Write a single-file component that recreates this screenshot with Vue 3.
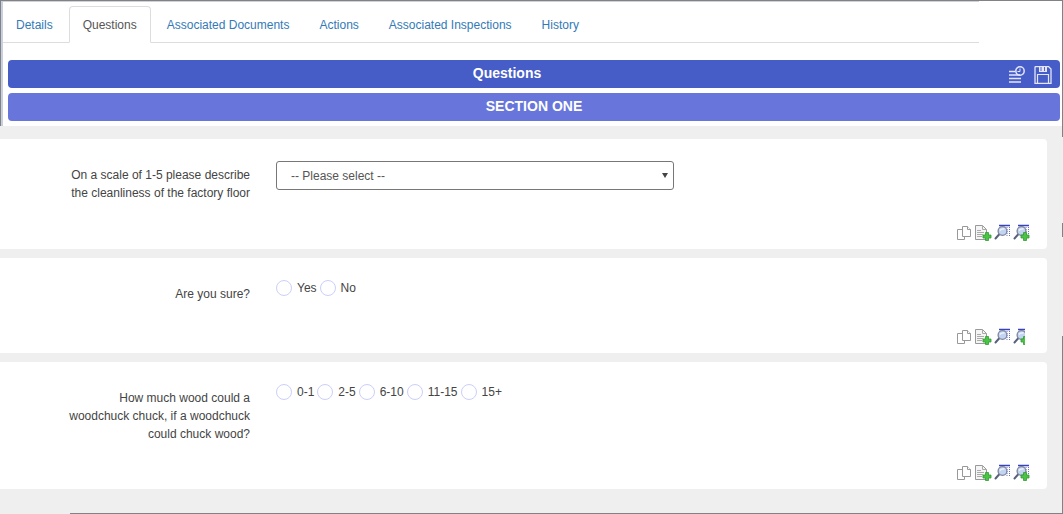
<script setup>
import { ref } from 'vue'

const tabs = ['Details', 'Questions', 'Associated Documents', 'Actions', 'Associated Inspections', 'History']
const active = ref('Questions')

const questions = [
  {
    id: 'clean',
    text: 'On a scale of 1-5 please describe the cleanliness of the factory floor',
    type: 'select',
    size: 'medium',
  },
  { id: 'sure', text: 'Are you sure?', type: 'radio', options: ['Yes', 'No'], size: 'small' },
  {
    id: 'wood',
    text: 'How much wood could a woodchuck chuck, if a woodchuck could chuck wood?',
    type: 'radio',
    options: ['0-1', '2-5', '6-10', '11-15', '15+'],
    size: 'large',
  },
]
const actions = ['Copy', 'Add note', 'View actions', 'Add action']
</script>

<template>
  <main class="page">
    <header class="head">
      <nav class="tabs">
        <a v-for="t in tabs" :key="t" href="#" class="tab" :class="{ on: t === active }" @click.prevent="active = t">{{ t }}</a>
      </nav>
      <div class="bars">
        <div class="bar main-bar">
          <h1>Questions</h1>
          <div class="tools">
            <button type="button" aria-label="Show history">
              <svg width="18" height="18" viewBox="0 0 18 18" fill="none" stroke="#e3e6fa">
                <path d="M1 5.500H7M1 9H12M1 12.500H13M1 16H13" stroke-width="1.600" />
                <circle cx="12" cy="5" r="4.200" stroke-width="1.500" />
                <path d="M12 2.500V5.500H9.500" />
              </svg>
            </button>
            <button type="button" aria-label="Save">
              <svg width="18" height="18" viewBox="0 0 18 18" fill="none" stroke="#e3e6fa">
                <path d="M1 1.500Q1 .500 2 .500H14.500L17 3V17.500H1Z" stroke-width="1.300" />
                <path d="M3.500 17.500V8.500H14.500V17.500" stroke-width="1.200" />
                <path d="M5 1h8v5H5z" fill="#e3e6fa" stroke="none" />
                <path d="M7 1v4M10.500 1v4" stroke="#5464cb" />
              </svg>
            </button>
          </div>
        </div>
        <div class="bar section-bar"><h2>SECTION ONE</h2></div>
      </div>
    </header>

    <div class="panel">
      <section v-for="q in questions" :key="q.id" class="card" :class="q.size">
        <div class="row">
          <label v-if="q.type === 'select'" :for="q.id" class="ask">{{ q.text }}</label>
          <div v-else :id="q.id" class="ask">{{ q.text }}</div>
          <div v-if="q.type === 'select'" class="answer">
            <select :id="q.id"><option>-- Please select --</option></select>
            <span class="arrow"></span>
          </div>
          <div v-else class="answer radios" role="radiogroup" :aria-labelledby="q.id">
            <label v-for="o in q.options" :key="o"><input type="radio" :name="q.id + '-answer'" :value="o" />{{ o }}</label>
          </div>
        </div>
        <div class="actions">
          <button v-for="(a, i) in actions" :key="a" type="button" :aria-label="a">
            <svg width="17" height="18" viewBox="0 0 17 18" fill="none">
              <g v-if="i === 0" stroke="#999" fill="#fff">
                <path d="M1.500 5.500H8.500V15.500H1.500Z" />
                <path d="M6.500 2.500H11.500L14.500 5.500V12.500H6.500Z" />
                <path d="M11.500 2.500V5.500H14.500" />
              </g>
              <g v-else-if="i === 1">
                <path d="M.500 1.500H7.500L11.500 5.500V15.500H.500Z" fill="#f5f5f5" stroke="#999" />
                <path d="M7.500 1.500V5.500H11.500M2 6.500H6M2 8.500H9M2 10.500H8M2 12.500H7" stroke="#aaa" />
              </g>
              <g v-else>
                <path d="M5 1.500H16" stroke="#3a42c4" stroke-width="1.500" />
                <path d="M13 3V12M15.500 3V12" stroke="#6a70d6" stroke-dasharray="1 1" />
                <path d="M5.500 10L1.500 14.500" stroke="#59617b" stroke-width="2" stroke-linecap="round" />
                <circle cx="8.500" cy="7" r="4.400" fill="#c3d4f2" stroke="#7d849c" stroke-width="1.300" />
                <path d="M6 6.500Q7.500 4.500 10.500 5" stroke="#f2f8ff" stroke-width="1.300" />
              </g>
              <path v-if="i === 1 || i === 3" d="M10.500 8.500H13.500V11H16V14H13.500V16.500H10.500V14H8V11H10.500Z" fill="#49c444" stroke="#329a35" stroke-width=".800" />
            </svg>
          </button>
        </div>
      </section>
    </div>
  </main>
</template>

<style>
body {
  margin: 0;
  background: #efefef;
}
</style>

<style scoped>
* {
  box-sizing: border-box;
}
.page {
  font: 12px/18px "Liberation Sans", Arial, sans-serif;
  color: #444;
}
.head {
  height: 126px;
  background: #fff;
  border-top: 1px solid #808286;
  border-left: 1px solid #808286;
  border-right: 1px solid #808286;
  box-shadow: inset 2px 0 #c9cfdf;
}
.tabs {
  display: flex;
  height: 42px;
  margin: 0 83px 0 2px;
  padding-top: 4px;
  border-top: 1px solid #d0d2d5;
  border-bottom: 1px solid #ddd;
}
.tab {
  height: 37px;
  padding: 9px 13px;
  border: 1px solid transparent;
  border-radius: 4px 4px 0 0;
  margin-right: 2px;
  color: #337ab7;
  text-decoration: none;
  white-space: nowrap;
}
.tab:first-child {
  padding-left: 12px;
}
.tab.on {
  color: #555;
  background: #fff;
  border-color: #ddd #ddd #fff;
}
.bars {
  display: grid;
  gap: 5px;
  padding: 17px 2px 0 7px;
}
.bar {
  position: relative;
  height: 28px;
  border-radius: 4px;
  color: #fff;
  text-align: center;
}
.main-bar {
  background: #465cc6;
}
.section-bar {
  background: #6876dc;
}
h1,
h2 {
  margin: 0;
  font-size: 14px;
  line-height: 27px;
}
h1 {
  padding-right: 54px;
}
button {
  display: block;
  padding: 0;
  border: 0;
  background: none;
}
svg {
  display: block;
}
.tools {
  position: absolute;
  top: 6px;
  right: 8px;
  display: flex;
  gap: 8px;
}
.panel {
  position: relative;
  padding: 13px 16px 25px 0;
}
.panel::after {
  content: "";
  position: absolute;
  inset: 0 0 0 auto;
  width: 1px;
  background: linear-gradient(#808286 11px, transparent 11px 97px, #808286 97px 111px, transparent 111px 210px, #808286 210px);
}
.panel::before {
  content: "";
  position: absolute;
  inset: auto 0 0 70px;
  height: 1px;
  background: #808286;
}
.card {
  display: flex;
  flex-direction: column;
  justify-content: space-between;
  margin-bottom: 9px;
  padding: 22px 17px 7px 0;
  background: #fff;
  border-radius: 0 4px 4px 0;
}
.card:last-child {
  margin-bottom: 0;
}
.medium {
  min-height: 110px;
}
.small {
  min-height: 95px;
}
.large {
  min-height: 127px;
}
.row {
  display: flex;
  gap: 26px;
}
.ask {
  width: 250px;
  padding: 5px 0 0 62px;
  text-align: right;
}
.answer {
  position: relative;
  width: 398px;
}
select {
  display: block;
  width: 100%;
  height: 29px;
  padding: 0 14px;
  font: inherit;
  color: #555;
  background: #fff;
  border: 1px solid #777;
  border-radius: 3px;
  appearance: none;
}
.arrow {
  position: absolute;
  top: 12px;
  right: 6px;
  border: 3px solid transparent;
  border-top: 5px solid #444;
  border-bottom: 0;
  pointer-events: none;
}
.radios {
  display: flex;
  gap: 3px;
}
.radios label {
  display: flex;
  height: 16px;
  align-items: center;
}
input {
  appearance: none;
  width: 16px;
  height: 16px;
  margin: 0 5px 0 0;
  border: 1px solid #cbcffa;
  border-radius: 50%;
  background: #fff;
}
.actions {
  display: flex;
  justify-content: flex-end;
  gap: 2px;
}
.small .actions button:last-child {
  clip-path: inset(0 5px 0 0);
}
</style>
